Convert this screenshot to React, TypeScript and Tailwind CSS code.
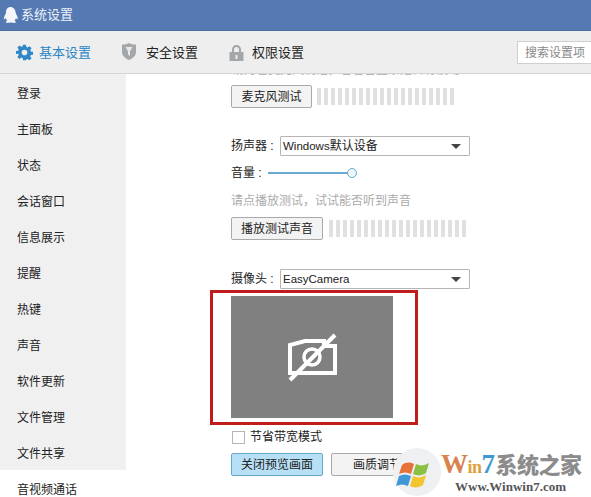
import React from "react";

const FONT = "font-['Liberation_Sans','Noto_Sans_CJK_SC',sans-serif]";
const NAV = ["登录", "主面板", "状态", "会话窗口", "信息展示", "提醒", "热键", "声音", "软件更新", "文件管理", "文件共享"];

function Meter({ count }: { count: number }) {
  return (
    <div className="flex gap-[3px] h-[17px]">
      {Array.from({ length: count }).map((_, i) => (
        <div key={i} className="w-[4px] h-full bg-[#e0e0e0]" />
      ))}
    </div>
  );
}

function Btn({ children, w, active }: { children: React.ReactNode; w: string; active?: boolean }) {
  return (
    <div
      className={`${w} h-[23px] shrink-0 flex items-center justify-center rounded-[2px] border text-[12px] leading-none ${
        active ? "bg-[#b7e0f7] border-[#66a9cc] text-[#222]" : "bg-[#f3f3f3] border-[#a9a9a9] text-[#222]"
      }`}
    >
      {children}
    </div>
  );
}

function Select({ children }: { children: React.ReactNode }) {
  return (
    <div className="w-[190px] h-[20px] border border-[#b5b5b5] rounded-[1px] bg-white flex items-center justify-between pl-[2px] pr-[8px] pt-[1px] text-[11.5px] text-[#222]">
      <span>{children}</span>
      <span className="w-0 h-0 border-l-[5px] border-r-[5px] border-t-[5px] border-l-transparent border-r-transparent border-t-[#444]" />
    </div>
  );
}

export default function App() {
  return (
    <div className={`${FONT} relative w-[591px] h-[497px] overflow-hidden bg-white flex flex-col text-[#222]`}>
      <div className="h-[30px] shrink-0 bg-[#5579b3] flex items-center pl-[3px] gap-[3px] text-[13px]">
        <svg width="15" height="18" viewBox="0 0 15 18" fill="#f4f6fa">
          <path d="M7.5 1C4.5 1 3 3.4 3 6.2c0 1-.3 1.500-1 2.800C1 11 .6 13 1.300 13.300c.5.200 1-.5 1.400-1.200.3 1.100.8 2 1.500 2.600-1 .4-1.500 1-1.300 1.600.3.700 2 .8 3.300.5.500-.2 1-.3 1.600-.3s1.200.1 1.700.3c1.300.3 3 .2 3.300-.5.200-.6-.3-1.200-1.300-1.600.7-.6 1.200-1.500 1.500-2.600.4.700.9 1.400 1.400 1.200.7-.3.300-2.300-.7-4.300-.7-1.300-1-1.800-1-2.800C12 3.400 10.500 1 7.500 1Z" />
        </svg>
        <span className="text-[#eef2f8]">系统设置</span>
      </div>

      <div className="h-[44px] shrink-0 bg-[#eeeeee] border-b border-[#d4d4d4] border-t border-t-[#4a6ba3] flex items-center text-[13px] relative pt-[1px]">
        <div className="flex items-center pl-[16px] w-[122px] gap-[6px] text-[#2b86c5]">
          <svg width="17" height="17" viewBox="0 0 24 24" fill="#2f86c8">
            <path fillRule="evenodd" d="M10 1h4l.6 3.200 1.900.8 2.700-1.900 2.800 2.800-1.900 2.700.8 1.900 3.100.5v4l-3.100.6-.8 1.900 1.900 2.700-2.800 2.800-2.700-1.900-1.900.8L14 23h-4l-.6-3.100-1.900-.8-2.700 1.900-2.800-2.800 1.900-2.700-.8-1.900L0 14v-4l3.100-.5.800-1.900L2 4.900l2.800-2.800 2.700 1.900 1.900-.8L10 1Zm2 7a4 4 0 1 0 0 8 4 4 0 0 0 0-8Z" />
          </svg>
          <span>基本设置</span>
        </div>
        <div className="flex items-center w-[107px] gap-[10px]">
          <svg width="14" height="17" viewBox="0 0 14 17" className="-mt-[2px]">
            <path d="M0 1.500C2.500 1.500 5 1 7 0c2 1 4.500 1.500 7 1.500V9c0 4-3.500 6.500-7 8-3.500-1.500-7-4-7-8V1.500Z" fill="#a3a7aa" />
            <path d="M3.500 4h7L8 8.500V13L6 11.500v-3L3.500 4Z" fill="#e8e8e8" />
          </svg>
          <span>安全设置</span>
        </div>
        <div className="flex items-center gap-[8px]">
          <svg width="15" height="16" viewBox="0 0 15 16">
            <path d="M4 7V4.500a3.500 3.500 0 0 1 7 0V7" fill="none" stroke="#a3a7aa" strokeWidth="2" />
            <rect x="0.500" y="7" width="14" height="9" fill="#a3a7aa" />
            <rect x="6.500" y="10" width="2" height="4" fill="#eee" />
          </svg>
          <span>权限设置</span>
        </div>
        <div className="ml-auto w-[80px] h-[23px] bg-white border border-[#cfcfcf] flex items-center pl-[7px] text-[12px] text-[#888] mr-[-6px] whitespace-nowrap">
          搜索设置项
        </div>
      </div>

      <div className="flex-1 flex min-h-0">
        <div className="w-[126px] shrink-0 flex flex-col">
          <div className="bg-[#f0f0f1] flex flex-col pt-[1px] h-[396px] shrink-0">
            {NAV.map((n) => (
              <div key={n} className="h-[36px] shrink-0 flex items-center pl-[17px] text-[12px] pt-[2px]">
                {n}
              </div>
            ))}
          </div>
          <div className="flex-1 flex items-center pl-[17px] text-[12px] pt-[11px] whitespace-nowrap">音视频通话</div>
        </div>

        <div className="flex-1 min-w-0 overflow-hidden pl-[105px] flex flex-col items-start">
          <div className="-mt-[13px] h-[18px] text-[12px] leading-[18px] text-[#aaa] whitespace-nowrap pl-[1px]">请对着麦克风说话，看看音量条是否有波动</div>
          <div className="flex items-center gap-[5px] mt-[6px]">
            <Btn w="w-[81px]">麦克风测试</Btn>
            <Meter count={20} />
          </div>

          <div className="flex items-center mt-[28px] text-[12px] h-[20px]">
            <span className="w-[49px] whitespace-nowrap">扬声器 :</span>
            <Select>
              Windows<span className="text-[12px]">默认设备</span>
            </Select>
          </div>
          <div className="flex items-center mt-[7px] text-[12px] h-[20px]">
            <span className="w-[37px] whitespace-nowrap">音量 :</span>
            <div className="w-[80px] h-[2px] bg-[#6aa9cf]" />
            <div className="w-[10px] h-[10px] rounded-full border border-[#6aa9cf] bg-[#eef6fb] -ml-[1px]" />
          </div>
          <div className="mt-[9px] text-[12px] leading-[18px] text-[#aaa] whitespace-nowrap">请点播放测试，试试能否听到声音</div>
          <div className="flex items-center gap-[6px] mt-[7px]">
            <Btn w="w-[92px]">播放测试声音</Btn>
            <Meter count={20} />
          </div>

          <div className="flex items-center mt-[29px] text-[12px] h-[20px]">
            <span className="w-[49px] whitespace-nowrap">摄像头 :</span>
            <Select>EasyCamera</Select>
          </div>

          <div className="-ml-[21px] mt-[1px] w-[208px] h-[135px] shrink-0 border-[3px] border-[#c01c1c] pl-[18px] pt-[3px]">
            <div className="w-[162px] h-[122px] bg-[#808080] flex items-center justify-center">
              <svg width="50" height="50" viewBox="0 0 50 50" fill="none" stroke="#ffffff">
                <path d="M3 41V13L18 9h19v5h11v27H3Z" strokeWidth="4" />
                <circle cx="25" cy="25" r="8" strokeWidth="3.500" />
                <path d="M3 48 L48 3" strokeWidth="4" />
              </svg>
            </div>
          </div>

          <div className="flex items-center mt-[4px] h-[16px] text-[12px] gap-[5px] ml-[1px] whitespace-nowrap">
            <div className="w-[13px] h-[13px] border border-[#b5b5b5] bg-white" />
            <span>节省带宽模式</span>
          </div>
          <div className="flex items-center gap-[8px] mt-[8px]">
            <Btn w="w-[92px]" active>关闭预览画面</Btn>
            <Btn w="w-[92px]">画质调节</Btn>
          </div>
        </div>
      </div>

      <div className="absolute left-[393px] top-[447px] w-[198px] h-[50px]">
        <svg className="absolute left-0 top-0" width="48" height="50" viewBox="0 0 48 50">
          <circle cx="24" cy="25" r="24" fill="#eef0f2" />
          <path d="M9 18c4-3 8-3 12-1l-3 10c-4-2-8-2-12 0Z" fill="#e8703a" />
          <path d="M23 17c4 2 8 2 13-1l-3 10c-4 3-9 3-13 1Z" fill="#8cc043" />
          <path d="M6 29c4-2 8-2 12 0l-3 10c-4-2-8-2-12 0Z" fill="#3f97d6" />
          <path d="M20 29c4 2 8 2 13-1l-3 10c-4 3-9 3-13 1Z" fill="#f2c42e" />
        </svg>
        <div className="absolute left-[48px] top-[1px] whitespace-nowrap font-['Liberation_Serif','Noto_Sans_CJK_SC',serif] font-bold text-[27px] leading-[30px] tracking-[-0.5px]">
          <span className="text-[#d9824d]">W</span>
          <span className="text-[#e0a040] text-[18px]">in</span>
          <span className="text-[#3f9ad0]">7</span>
          <span className="text-[#8c8c8c] font-['Noto_Sans_CJK_SC',sans-serif] font-black text-[22px] ml-[1px]">系统之家</span>
        </div>
        <div className="absolute left-[62px] top-[32px] whitespace-nowrap font-['Liberation_Serif',serif] font-bold text-[13px] leading-[16px] text-[#555]">
          Www.Winwin7.com
        </div>
      </div>
    </div>
  );
}
